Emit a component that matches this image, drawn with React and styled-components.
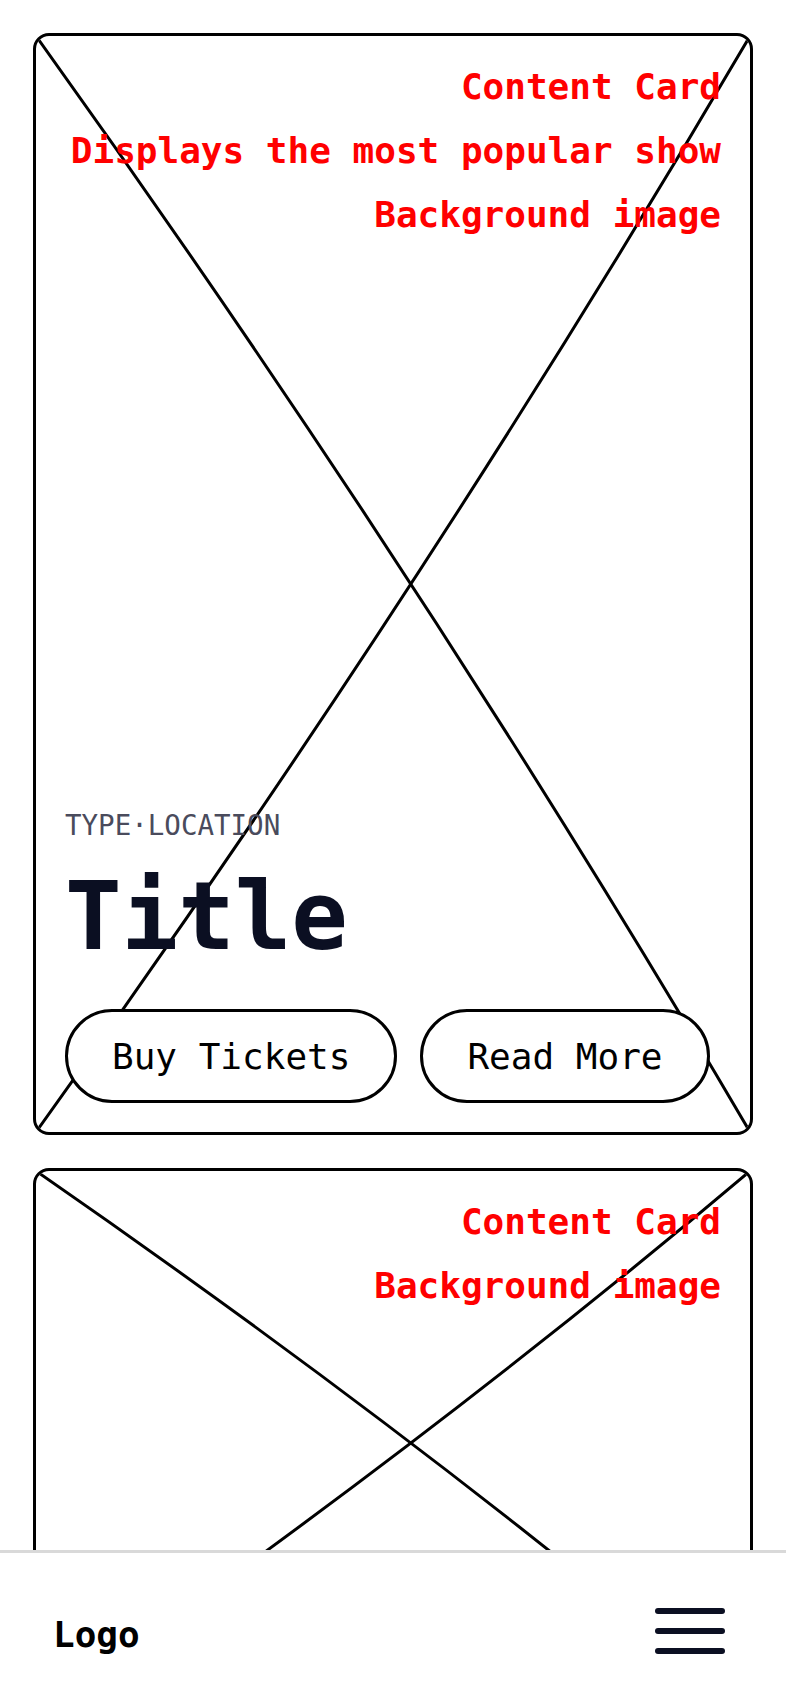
import React from 'react'
import styled, { createGlobalStyle } from 'styled-components'

const GlobalStyle = createGlobalStyle`
    *{
        box-sizing: border-box;
    }
    body{
        margin: 0;
        background: #ffffff;
        font-family: "DejaVu Sans Mono", "Liberation Mono", monospace;
    }
`

function Placeholder() {
    return (
        <Cross viewBox="0 0 100 100" preserveAspectRatio="none">
            <path d="M0 0 Q55 50 100 100" vectorEffect="non-scaling-stroke" />
            <path d="M100 0 Q55 50 0 100" vectorEffect="non-scaling-stroke" />
        </Cross>
    )
}

function App() {
    return (
        <>
            <GlobalStyle />
            <Page>
                <Card $minHeight={1102}>
                    <Placeholder />
                    <Notes>
                        <Note>Content Card</Note>
                        <Note>Displays the most popular show</Note>
                        <Note>Background image</Note>
                    </Notes>
                    <Info>
                        <Meta>TYPE·LOCATION</Meta>
                        <Title>Title</Title>
                        <Buttons>
                            <Button>Buy Tickets</Button>
                            <Button>Read More</Button>
                        </Buttons>
                    </Info>
                </Card>
                <Card $minHeight={550}>
                    <Placeholder />
                    <Notes>
                        <Note>Content Card</Note>
                        <Note>Background image</Note>
                    </Notes>
                </Card>
            </Page>
            <NavBar>
                <Logo>Logo</Logo>
                <MenuButton aria-label="Menu">
                    <svg width="70" height="46" viewBox="0 0 70 46">
                        <rect x="0" y="0" width="70" height="6" rx="3" />
                        <rect x="0" y="20" width="70" height="6" rx="3" />
                        <rect x="0" y="40" width="70" height="6" rx="3" />
                    </svg>
                </MenuButton>
            </NavBar>
        </>
    )
}

const Page = styled.main`
    display: flex;
    flex-direction: column;
    gap: 33px;
    padding: 33px 33px 190px;
`

const Card = styled.section`
    position: relative;
    display: flex;
    flex-direction: column;
    justify-content: space-between;
    min-height: ${p => p.$minHeight}px;
    padding: 29px;
    border: 3px solid #000;
    border-radius: 16px;
    overflow: hidden;
`

const Cross = styled.svg`
    position: absolute;
    inset: 0;
    width: 100%;
    height: 100%;
    fill: none;
    stroke: #000;
    stroke-width: 3;
    pointer-events: none;
`

const Notes = styled.div`
    position: relative;
    display: flex;
    flex-direction: column;
    align-items: flex-end;
    gap: 20px;
`

const Note = styled.p`
    margin: 0;
    color: #ff0000;
    font-size: 36px;
    font-weight: 700;
    line-height: 44px;
    white-space: nowrap;
`

const Info = styled.div`
    position: relative;
    display: flex;
    flex-direction: column;
    align-items: flex-start;
`

const Meta = styled.span`
    color: #4a4b5c;
    font-size: 27.5px;
    line-height: 27px;
`

const Title = styled.h1`
    margin: 31px 0 45px;
    color: #0b0f22;
    font-size: 94px;
    font-weight: 700;
    line-height: 94px;
`

const Buttons = styled.div`
    display: flex;
    gap: 23px;
`

const Button = styled.button`
    height: 94px;
    padding: 0 44px;
    background: #ffffff;
    color: #000;
    border: 3px solid #000;
    border-radius: 999px;
    font-family: "DejaVu Sans Mono", "Liberation Mono", monospace;
    font-size: 36px;
    white-space: nowrap;
`

const NavBar = styled.nav`
    position: fixed;
    left: 0;
    right: 0;
    bottom: 0;
    height: 154px;
    display: flex;
    align-items: center;
    justify-content: space-between;
    padding: 4px 53px 0;
    background: #ffffff;
    border-top: 3px solid #d9d9d9;
`

const Logo = styled.span`
    margin-top: 8px;
    color: #000;
    font-size: 36px;
    font-weight: 700;
`

const MenuButton = styled.button`
    display: flex;
    padding: 8px;
    background: none;
    border: none;
    svg{
        fill: #0b0f22;
    }
`

export default App
